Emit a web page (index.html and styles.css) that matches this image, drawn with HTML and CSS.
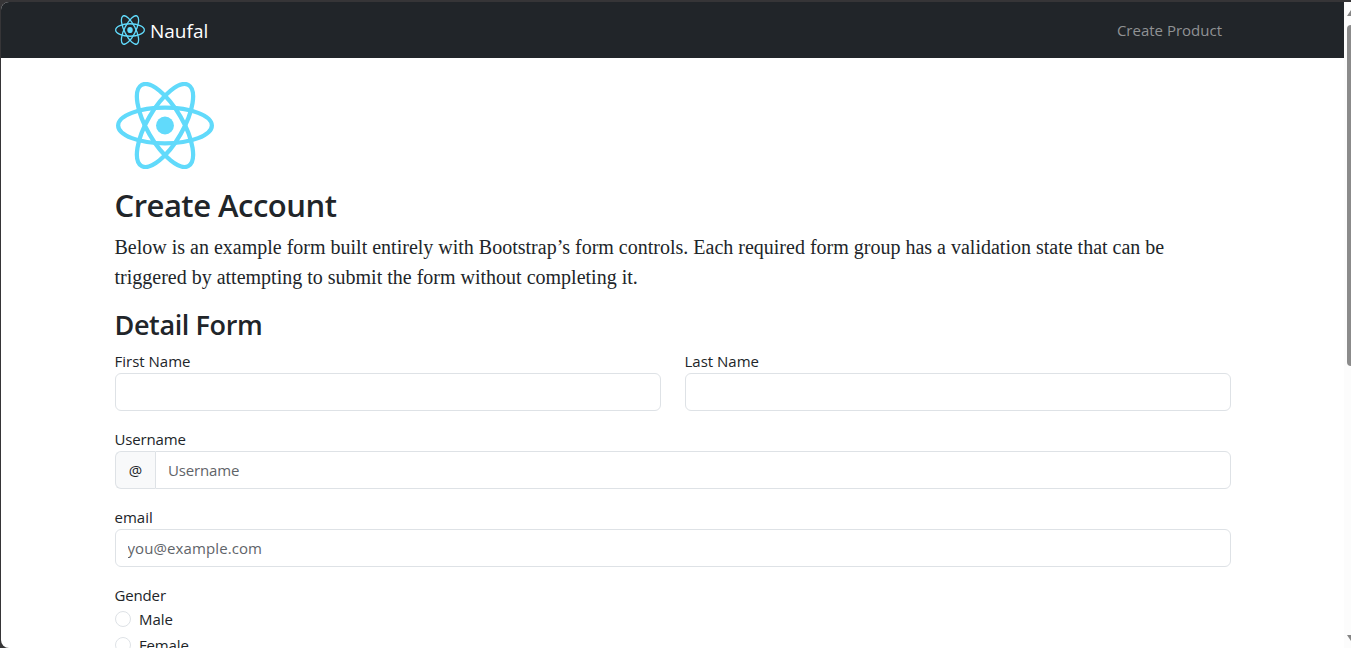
FILE: index.html
```
<!DOCTYPE html>
<html lang="en">
<head>
<meta charset="utf-8">
<title>Create Account</title>
<link rel="stylesheet" href="styles.css">
</head>
<body>
<svg class="defs" aria-hidden="true">
  <symbol id="atom" viewBox="-11.5 -10.232 23 20.463" preserveAspectRatio="none">
    <circle r="2.1" fill="#61dafb"/>
    <g fill="none" stroke="#61dafb">
      <ellipse rx="11" ry="4.2"/>
      <ellipse rx="11" ry="4.2" transform="rotate(60)"/>
      <ellipse rx="11" ry="4.2" transform="rotate(120)"/>
    </g>
  </symbol>
</svg>
<div class="window">
  <div class="page">
    <header class="navbar">
      <a class="brand"><svg class="brand-logo"><use href="#atom"/></svg><span class="brand-name">Naufal</span></a>
      <a class="nav-link">Create Product</a>
    </header>
    <main class="container">
      <svg class="logo"><use href="#atom"/></svg>
      <h2 class="title">Create Account</h2>
      <p class="lead">Below is an example form built entirely with Bootstrap’s form controls. Each required form group has a validation state that can be triggered by attempting to submit the form without completing it.</p>
      <h3 class="subtitle">Detail Form</h3>
      <form class="form">
        <div class="row">
          <div class="field"><label class="label">First Name</label><input class="input" type="text"></div>
          <div class="field"><label class="label">Last Name</label><input class="input" type="text"></div>
        </div>
        <div class="field">
          <label class="label tight">Username</label>
          <div class="group"><span class="addon">@</span><input class="input joined" type="text" placeholder="Username"></div>
        </div>
        <div class="field"><label class="label">email</label><input class="input email" type="text" placeholder="you@example.com"></div>
        <div class="field">
          <label class="label tight">Gender</label>
          <div class="check"><span class="radio"></span><span class="option">Male</span></div>
          <div class="check"><span class="radio"></span><span class="option tight">Female</span></div>
        </div>
      </form>
    </main>
  </div>
  <div class="scrollbar">
    <svg class="scroll-arrow" viewBox="0 0 4 6"><path d="M0 6 4 0V6Z" fill="#858585"/></svg>
    <div class="thumb"></div>
    <svg class="scroll-arrow down" viewBox="0 0 4 6"><path d="M0 0H4V6Z" fill="#858585"/></svg>
  </div>
</div>
</body>
</html>
```
FILE: styles.css
```
* { box-sizing: border-box; }
body {
  margin: 0;
  height: 648px;
  overflow: hidden;
  padding: 2px 0 0 1px;
  background: #363537;
  color: #212529;
  font: 15px/24px "Open Sans", "Noto Sans", sans-serif;
}
.defs { position: absolute; width: 0; height: 0; }
.window {
  display: flex;
  height: 646px;
  overflow: hidden;
  border-radius: 8px 0 0 8px;
  background: #fff;
}
.page { width: 1343px; height: 646px; overflow: hidden; flex: none; }
.navbar {
  display: flex;
  align-items: center;
  justify-content: space-between;
  height: 56px;
  padding: 0 122px 0 114px;
  background: #212529;
}
.brand { display: flex; align-items: center; gap: 5px; color: #fff; font-size: 19px; }
.brand-logo { width: 30px; height: 30px; }
.brand-name { margin-top: 1px; }
.nav-link { color: #909294; }
.container { padding: 24px 113px 0 114px; }
.logo { display: block; width: 98px; height: 87px; margin-left: 1px; }
.title { margin: 17px 0 8px -0.5px; font-size: 31px; line-height: 38px; font-weight: 600; letter-spacing: -0.5px; }
.lead { margin: 0 0 16px -0.5px; font: 20px/30px "Liberation Serif", serif; }
.subtitle { margin: 0 0 7.6px -0.5px; font-size: 27px; line-height: 33.4px; font-weight: 600; letter-spacing: -0.38px; }
.form { display: flex; flex-direction: column; gap: 16px; }
.row { display: grid; grid-template-columns: 1fr 1fr; gap: 24px; }
.field { display: flex; flex-direction: column; }
.label { height: 24px; margin-left: -0.5px; }
.tight { letter-spacing: -0.15px; }
.input {
  width: 100%;
  height: 38px;
  padding: 0 12px;
  border: 1px solid #dee2e6;
  border-radius: 6px;
  background: #fff;
  color: #212529;
  font: inherit;
}
.input::placeholder { color: #5f6469; opacity: 1; letter-spacing: -0.15px; }
.email { padding-left: 11.5px; }
.email::placeholder { letter-spacing: 0.1px; }
.group { display: flex; }
.addon {
  display: flex;
  align-items: center;
  justify-content: center;
  width: 40px;
  flex: none;
  border: 1px solid #dee2e6;
  border-right: 0;
  border-radius: 6px 0 0 6px;
  background: #f8f9fa;
}
.joined { border-radius: 0 6px 6px 0; }
.check { display: flex; align-items: center; gap: 8px; height: 24px; margin-bottom: 2px; }
.radio { width: 16px; height: 16px; border: 1px solid #dee2e6; border-radius: 50%; }
.scrollbar { display: flex; flex-direction: column; flex: 1; padding: 8px 0 7px 3px; background: #fcfcfc; }
.scroll-arrow { width: 4px; height: 6px; flex: none; }
.thumb { width: 8px; height: 341px; margin-top: 9px; border-radius: 4px; background: #8b8b8b; flex: none; }
.down { margin-top: auto; }
```
